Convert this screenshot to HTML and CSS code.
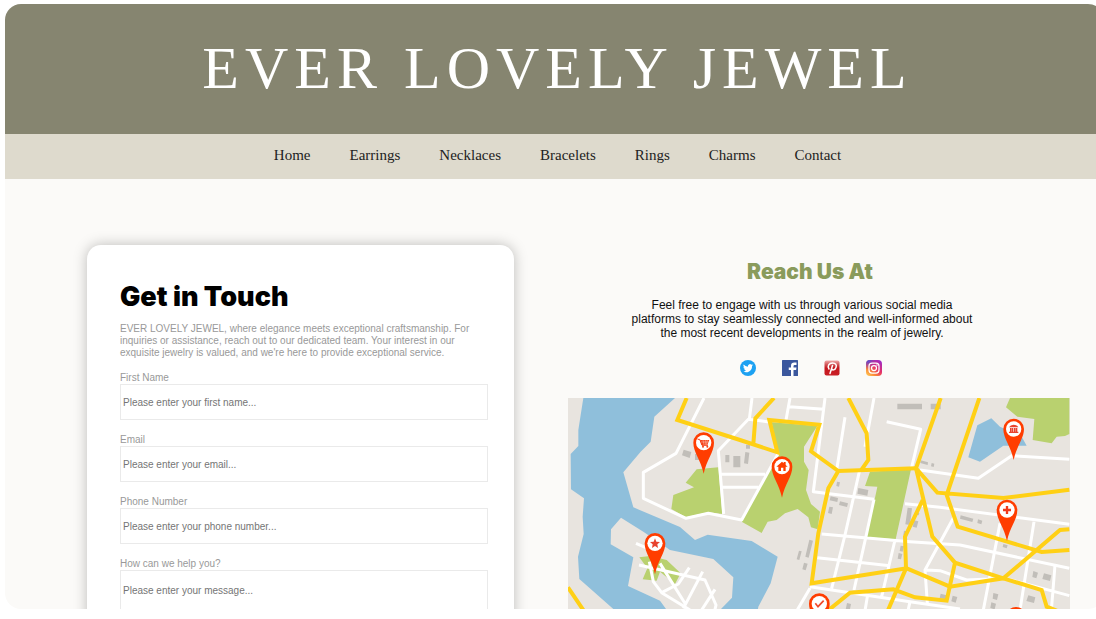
FILE: index.html
```html
<!DOCTYPE html>
<html lang="en">
<head>
<meta charset="utf-8">
<meta name="viewport" content="width=device-width, initial-scale=1">
<title>Ever Lovely Jewel - Contact</title>
<link rel="stylesheet" href="styles.css">
</head>
<body>
<div class="frame">
  <header class="banner"><h1 class="brand">EVER LOVELY JEWEL</h1></header>
  <nav class="nav">
    <a href="#">Home</a>
    <a href="#">Earrings</a>
    <a href="#">Necklaces</a>
    <a href="#">Bracelets</a>
    <a href="#">Rings</a>
    <a href="#">Charms</a>
    <a href="#">Contact</a>
  </nav>
  <main class="content">
    <form class="card">
      <h2 class="card-title">Get in Touch</h2>
      <p class="intro">EVER LOVELY JEWEL, where elegance meets exceptional craftsmanship. For inquiries or assistance, reach out to our dedicated team. Your interest in our exquisite jewelry is valued, and we're here to provide exceptional service.</p>
      <div class="field">
        <label for="name">First Name</label>
        <input id="name" type="text" placeholder="Please enter your first name...">
      </div>
      <div class="field">
        <label for="email">Email</label>
        <input id="email" type="email" placeholder="Please enter your email...">
      </div>
      <div class="field">
        <label for="phone">Phone Number</label>
        <input id="phone" type="tel" placeholder="Please enter your phone number...">
      </div>
      <div class="field">
        <label for="message">How can we help you?</label>
        <textarea id="message" placeholder="Please enter your message..."></textarea>
      </div>
    </form>
    <section class="reach">
      <h2 class="reach-title">Reach Us At</h2>
      <p class="reach-text">Feel free to engage with us through various social media platforms to stay seamlessly connected and well-informed about the most recent developments in the realm of jewelry.</p>
      <div class="social">
        <a href="#" aria-label="Twitter"><svg viewBox="0 0 32 32"><circle cx="16" cy="16" r="16" fill="#1da1f2"/><path fill="#fff" d="M26 10.2a8 8 0 0 1-2.400.7 4 4 0 0 0 1.800-2.300 8 8 0 0 1-2.600 1A4.100 4.100 0 0 0 15.800 13.300 11.700 11.700 0 0 1 7.300 9a4.100 4.100 0 0 0 1.300 5.500 4 4 0 0 1-1.900-.5 4.100 4.100 0 0 0 3.300 4.100 4 4 0 0 1-1.900.1 4.100 4.100 0 0 0 3.900 2.800A8.300 8.300 0 0 1 6 22.700 11.700 11.700 0 0 0 24 12.300a8 8 0 0 0 2-2.100z"/></svg></a>
        <a href="#" aria-label="Facebook"><svg viewBox="0 0 32 32"><rect width="32" height="32" rx="1" fill="#3b579d"/><path fill="#fff" d="M18 32V20h-4.500v-5H18v-3.500C18 7 20.500 5 24.500 5H29v5h-3c-2 0-3 .6-3 2.500V15h6l-.8 5H23v12z"/></svg></a>
        <a href="#" aria-label="Pinterest"><svg viewBox="0 0 32 32"><defs><linearGradient id="pin-red" x2="0" y2="1"><stop stop-color="#efaaaa"/><stop offset=".3" stop-color="#cf4c4f"/><stop offset=".5" stop-color="#c5161d"/><stop offset="1" stop-color="#c92026"/></linearGradient></defs><rect x="1" y="1" width="30" height="30" rx="4" fill="url(#pin-red)"/><path fill="none" stroke="#fff" stroke-width="3" stroke-linecap="round" d="M10 18c-4-6 0-12 7-12 6 0 9 4 7 9-2 6-8 6-9 2m2-6-5 16"/></svg></a>
        <a href="#" aria-label="Instagram"><svg viewBox="0 0 32 32"><defs><linearGradient id="insta" x1="0" y1="1" x2=".8" y2="0"><stop stop-color="#ffd35a"/><stop offset=".3" stop-color="#fb8a38"/><stop offset=".6" stop-color="#e52f67"/><stop offset="1" stop-color="#a02bc4"/></linearGradient><radialGradient id="insta-blue" cx=".1" cy="0" r=".6"><stop stop-color="#4058dc"/><stop offset="1" stop-color="#8a35cc" stop-opacity="0"/></radialGradient></defs><rect width="32" height="32" rx="8" fill="url(#insta)"/><rect width="32" height="32" rx="8" fill="url(#insta-blue)"/><g fill="none" stroke="#fff" stroke-width="2.500"><rect x="6" y="6" width="20" height="20" rx="6"/><circle cx="16" cy="16" r="5"/></g><circle cx="22" cy="10" r="1.500" fill="#fff"/></svg></a>
      </div>
      <svg class="map" viewBox="24 24 1506 840" role="img" aria-label="Map of our locations">
        <defs>
          <g id="marker"><path fill="#ff3d00" d="M0 93C-8 53-31 28-31 0a31 31 0 0 1 62 0C31 28 8 53 0 93z"/><circle r="23" fill="#fff"/></g>
        </defs>
        <rect x="24" y="24" width="1506" height="840" fill="#e8e4df"/>
        <path fill="#8fbfdb" d="M70 24 55 120V168L32 192 33 298 72 325 68 380 71 432 54 500 58 567 160 657 300 864H560L595 650 632 580 653 500 575 453 443 434 405 450 360 411 220 352 190 247 242 185 272 155 283 80 345 24zM1294 85 1252 106 1225 202 1260 215 1330 167H1400L1385 140 1320 110z"/>
        <path fill="#e8e4df" d="M183 383 153 418 152 463 220 502 204 588 300 632 318 657 330 700H460L483 657 516 623 520 562 460 507 330 480 250 425z"/>
        <g fill="#b9d16f">
          <path d="M410 238 475 232 487 372 445 367 378 382 334 357 340 315 402 292 377 278z"/>
          <path d="M238 502 270 498 320 510 362 550 345 582 300 545 290 572 248 568 262 535z"/>
          <path d="M635 97 772 108 732 170V215L746 240 738 300 753 342 780 365 773 418 753 412 745 382 713 357 675 370 650 390 623 395 605 429 545 395 655 190z"/>
          <path d="M930 245 1053 238 1007 448 920 442 952 290 915 288z"/>
          <path d="M1350 24H1528V132L1515 138 1490 140 1475 160 1418 150 1423 87 1372 80 1338 52z"/>
        </g>
        <g fill="#c1beb9">
          <path d="M371 179 394 186 389 204 366 196zM405 192h12v18h-12zM496 195h12v22h-12zM520 198h21v34h-21zM556 186l12 2-4 34-12-2zM558 164h12v12h-12z"/>
          <path d="M1012 41h74v17h-74zM1112 41h30v17h-30zM1082 211l22 6-1 8-22-6zM1115 219l8 2-2 10-8-2z"/>
          <path d="M831 275l9 2-3 13-8-2zM895 294l30 6-3 17-30-6zM812 319l22 5-2 12-23-5zM840 334l24 6-3 11-24-6zM808 350l11 2-4 20-11-3zM748 449l11 3-13 51-10-3zM717 482l8 2-7 26-8-2zM732 518l11 3-6 20-10-3z"/>
          <path d="M1043 353l13 2-6 50-14-2zM1062 391l13 3-5 19-12-3zM1070 367l8 2-2 7-7-2zM1202 376l38 10-3 10-37-10zM1254 388l13 4-3 11-12-4zM1330 462l13 4-3 9-12-4zM1032 422l7 2-3 14-6-2zM1022 467l10 2-4 16-9-2zM1016 489l11 3-4 16-10-2zM1420 543l14 5-5 17-12-4zM1452 550l22 6-4 17-23-6zM1142 611l18 5-4 12-17-4zM1178 617l14 4-5 17-13-4zM1300 609l15 4-4 17-13-4zM1405 616l21 6-4 17-23-6zM1294 637l14 4-4 17-13-4zM861 639l12 3-4 20-12-3z"/>
        </g>
        <g fill="none" stroke="#fff" stroke-width="9" stroke-linejoin="round">
          <path d="M432 24 348 190 250 247V325L378 385 445 370 545 390 655 190M491 372 475 182 565 88 628 96M576 24 568 88M484 253H615M487 292H595"/>
          <path d="M690 24 678 90M688 50 792 58M795 24 760 305 942 328M855 82 830 240M942 24 915 170M898 245 855 435 815 595M942 328 920 430 882 600M785 432 1050 455 1200 465 1528 535M772 503 990 527M750 590 1050 635 1200 657M750 595 700 680M1005 450 965 620M980 95 1082 118 1055 232M922 620 912 680"/>
          <path d="M1080 240 1255 265 1355 197 1528 208M1035 341 1140 352 1528 403M1185 375 1095 540 1102 640M1320 400 1270 660M1422 395 1380 660M1485 525 1475 650M1100 540 1140 542 1220 570 1335 565 1528 617M1050 635 1040 680"/>
          <path d="M228 460 285 485M237 525 435 570 468 645 460 680M268 515 280 575 305 608 390 660M300 520 378 645M305 608 355 582 388 533M428 545 370 655M465 598 425 660"/>
        </g>
        <g fill="none" stroke="#ffd015" stroke-width="12">
          <path d="M380 24 352 90 540 150 652 187 628 90 778 104 753 184 835 243 1068 235M642 24 586 85 580 162M865 24 920 130 925 210 902 243M835 243 805 295 775 430 755 580 1040 535 1170 590 1330 565 1500 420 1528 418"/>
          <path d="M1142 24 1068 235 1132 308 1330 324 1528 299M1258 24 1160 315 1193 410 1445 486 1528 480M1068 235 1117 440 1185 518 1330 565 1445 600 1460 650 1495 664M1088 330 1035 440 1038 535 980 670M1185 518 1160 632 1065 622 1000 598 870 608 800 665M24 592 80 675"/>
        </g>
        <g transform="translate(431 158)"><use href="#marker"/><path fill="none" stroke="#f5431b" stroke-width="3" d="M-18-10h6L-5 8H13"/><path fill="#f5431b" d="M-11-8H17L11 7H-6z"/><path stroke="#fff" d="M-8-2H15M-2-8 1 7M5-8V7M11-8 8 7"/><circle cx="-2" cy="12" r="3" fill="#f5431b"/><circle cx="11" cy="12" r="3" fill="#f5431b"/></g>
        <g transform="translate(285 460)"><use href="#marker"/><path fill="#e8432e" d="M0-15 4-5 15-4 7 3 9 14 0 8-9 14-7 3-15-4-4-5z"/></g>
        <g transform="translate(666 230)"><use href="#marker"/><path fill="#ff3d00" d="M-17 0 0-15 5-10V-14H11V-5L17 0H11V13H4V3H-3V13H-11V0z"/></g>
        <g transform="translate(778 641)"><use href="#marker"/><path fill="none" stroke="#f0492c" stroke-width="5" d="M-12-1-4 9 13-9"/></g>
        <g transform="translate(1361 117)"><use href="#marker"/><path fill="#e8432e" d="M-14-5Q-10-13 0-13T14-5zM-11-3h5V8h-5zM-5-3h4V8h-4zM1-3h4V8H1zM6-3h5V8H6zM-14 8H14v4h-28z"/></g>
        <g transform="translate(1341 360)"><use href="#marker"/><path stroke="#f0391b" stroke-width="7" d="M-12 0H12M0-12V12"/></g>
        <g transform="translate(1368 682)"><use href="#marker"/></g>
      </svg>
    </section>
  </main>
</div>
</body>
</html>
```
FILE: styles.css
```css
* { box-sizing: border-box; }
body {
  margin: 0;
  background: #fff;
  font-family: "Liberation Sans", Arial, sans-serif;
  overflow: hidden;
}
h1, h2, p { margin: 0; }
.frame {
  margin: 4px -8px 0 5px;
  height: calc(100vh - 14px);
  border-radius: 16px;
  background: #fbfaf8;
  overflow: hidden;
}
.banner {
  display: flex;
  align-items: center;
  justify-content: center;
  height: 130px;
  padding: 0 0 2px 6px;
  background: #868570;
}
.brand {
  color: #fff;
  font: 400 60px/72px "Liberation Serif", "Times New Roman", serif;
  letter-spacing: 6px;
}
.nav {
  display: flex;
  align-items: center;
  justify-content: center;
  gap: 39px;
  height: 45px;
  padding: 0 0 4px 6px;
  background: #dedacd;
  font: 15px/18px "Liberation Serif", "Times New Roman", serif;
}
.nav a { color: #222; text-decoration: none; }
.content {
  display: grid;
  grid-template-columns: 427fr 502fr;
  align-items: start;
  gap: 54px;
  padding: 66px 34px 66px 82px;
}
.card {
  display: flex;
  flex-direction: column;
  padding: 32px 26px 32px 33px;
  border-radius: 14px;
  background: #fff;
  box-shadow: 0 0 14px rgba(0, 0, 0, .25);
}
.card-title {
  font: 900 27px/40px Inter, "Arial Black", sans-serif;
  color: #000;
}
.intro {
  margin: 6px 0 13px;
  color: #999;
  font-size: 10px;
  line-height: 12px;
}
.field {
  display: flex;
  flex-direction: column;
  margin-bottom: 14px;
  color: #999;
  font-size: 10px;
  line-height: 12px;
}
.field input, .field textarea {
  height: 36px;
  padding: 0 2px;
  border: 1px solid #eaeaea;
  border-radius: 0;
  background: #fff;
  font: 10px/12px "Liberation Sans", Arial, sans-serif;
  resize: none;
}
.field textarea { height: 90px; padding-top: 14px; }
.field ::placeholder { color: #757575; opacity: 1; }
.reach {
  display: flex;
  flex-direction: column;
  padding-top: 14px;
}
.reach-title {
  padding-right: 18px;
  color: #8a9b5c;
  font: 900 21px/26px Inter, "Arial Black", sans-serif;
  text-align: center;
}
.reach-text {
  padding: 13px 95px 0 61px;
  color: #111;
  font-size: 12px;
  line-height: 14px;
  text-align: center;
}
.social {
  display: flex;
  justify-content: center;
  gap: 26px;
  padding: 20px 17px 22px 0;
}
.social svg { display: block; width: 16px; height: 16px; }
.map { display: block; width: 100%; }
```
